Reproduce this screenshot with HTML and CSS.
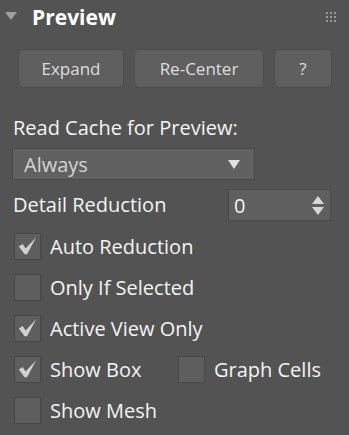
FILE: index.html
```html
<!DOCTYPE html>
<html lang="en">
<head>
    <meta charset="UTF-8">
    <meta name="viewport" content="width=device-width, initial-scale=1.0">
    <title>Preview</title>
    <link rel="stylesheet" href="styles.css">
</head>
<body>
    <div class="panel">
        <div class="rollout-head">
            <span class="caret"></span>
            <h1 class="title">Preview</h1>
            <svg class="grip" width="10" height="10" viewBox="0 0 10 10">
                <rect x="0" y="0" width="2" height="2"/><rect x="4" y="0" width="2" height="2"/><rect x="8" y="0" width="2" height="2"/>
                <rect x="0" y="4" width="2" height="2"/><rect x="4" y="4" width="2" height="2"/><rect x="8" y="4" width="2" height="2"/>
                <rect x="0" y="8" width="2" height="2"/><rect x="4" y="8" width="2" height="2"/><rect x="8" y="8" width="2" height="2"/>
            </svg>
        </div>

        <div class="buttons">
            <button class="btn btn-expand">Expand</button>
            <button class="btn btn-center">Re-Center</button>
            <button class="btn btn-help">?</button>
        </div>

        <div class="field">
            <label class="label">Read Cache for Preview:</label>
            <div class="dropdown">
                <span>Always</span>
                <span class="drop-arrow"></span>
            </div>
        </div>

        <div class="spin-row">
            <label class="label">Detail Reduction</label>
            <div class="spinner">
                <span>0</span>
                <span class="spin-arrows">
                    <span class="up"></span>
                    <span class="down"></span>
                </span>
            </div>
        </div>

        <div class="checks">
            <div class="check-row">
                <span class="check"><span class="box"><svg class="tick" viewBox="0 0 26 26"><path d="M4 13 L8 10.5 L11 15 L22 3.5 L12.5 21 L10 21 Z"/></svg></span>Auto Reduction</span>
            </div>
            <div class="check-row">
                <span class="check"><span class="box"></span>Only If Selected</span>
            </div>
            <div class="check-row">
                <span class="check"><span class="box"><svg class="tick" viewBox="0 0 26 26"><path d="M4 13 L8 10.5 L11 15 L22 3.5 L12.5 21 L10 21 Z"/></svg></span>Active View Only</span>
            </div>
            <div class="check-row">
                <span class="check check-wide"><span class="box"><svg class="tick" viewBox="0 0 26 26"><path d="M4 13 L8 10.5 L11 15 L22 3.5 L12.5 21 L10 21 Z"/></svg></span>Show Box</span>
                <span class="check"><span class="box"></span>Graph Cells</span>
            </div>
            <div class="check-row">
                <span class="check"><span class="box"></span>Show Mesh</span>
            </div>
        </div>
    </div>
</body>
</html>
```

FILE: styles.css
```css
body {
    margin: 0;
    background-color: #535353;
    font-family: 'Open Sans', 'Liberation Sans', sans-serif;
    color: #f4f4f4;
}
.panel {
    width: 349px;
    height: 435px;
    overflow: hidden;
}
.rollout-head {
    display: flex;
    align-items: center;
    height: 33px;
    padding: 0 13px 0 5px;
}
.caret {
    width: 0;
    height: 0;
    border-left: 6.5px solid transparent;
    border-right: 6.5px solid transparent;
    border-top: 8px solid #a0a0a0;
    margin: -2px 15px 0 0;
}
.title {
    margin: 0;
    font-size: 21px;
    font-weight: bold;
    color: #fff;
    flex: 1;
}
.grip {
    fill: #9a9a9a;
}
.buttons {
    display: flex;
    gap: 10px;
    padding: 16px 0 0 18px;
}
.btn {
    height: 39px;
    background-color: #5f5f5f;
    border: 1px solid #4c4c4c;
    border-radius: 5px;
    color: #dedede;
    font-family: inherit;
    font-size: 17px;
    padding: 0;
}
.btn-expand { width: 106px; }
.btn-center { width: 130px; }
.btn-help { width: 58px; }
.label {
    display: block;
    font-size: 20px;
    line-height: 24px;
}
.field {
    padding: 28px 0 0 13px;
}
.dropdown {
    display: flex;
    align-items: center;
    justify-content: space-between;
    box-sizing: border-box;
    width: 243px;
    height: 32px;
    margin: 8px 0 0 -1px;
    padding: 0 14px 0 11px;
    background-color: #616161;
    border: 1px solid #484848;
    color: #d4d4d4;
    font-size: 20px;
}
.drop-arrow {
    width: 0;
    height: 0;
    border-left: 6px solid transparent;
    border-right: 6px solid transparent;
    border-top: 9px solid #e0e0e0;
}
.spin-row {
    display: flex;
    align-items: center;
    justify-content: space-between;
    padding: 9px 18px 0 13px;
}
.spinner {
    display: flex;
    align-items: center;
    justify-content: space-between;
    box-sizing: border-box;
    width: 103px;
    height: 32px;
    padding: 0 6px 0 5px;
    background-color: #5f5f5f;
    border: 1px solid #484848;
    font-size: 20px;
}
.spin-arrows {
    display: flex;
    flex-direction: column;
    gap: 3px;
}
.spin-arrows .up {
    border-left: 6px solid transparent;
    border-right: 6px solid transparent;
    border-bottom: 8px solid #d8d8d8;
}
.spin-arrows .down {
    border-left: 6px solid transparent;
    border-right: 6px solid transparent;
    border-top: 8px solid #d8d8d8;
}
.checks {
    display: flex;
    flex-direction: column;
    gap: 14px;
    padding: 12px 0 0 14px;
}
.check-row {
    display: flex;
    height: 27px;
}
.check {
    display: flex;
    align-items: center;
    gap: 9px;
    font-size: 20px;
    line-height: 24px;
}
.check-wide {
    width: 164px;
}
.box {
    display: flex;
    box-sizing: border-box;
    width: 27px;
    height: 27px;
    background-color: #5e5e5e;
    border: 1px solid #474747;
}
.tick {
    width: 25px;
    height: 25px;
    fill: #d0d0d0;
}
```
